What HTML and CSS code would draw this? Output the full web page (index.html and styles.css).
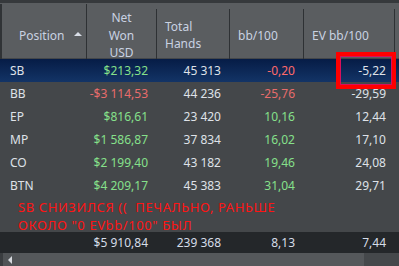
FILE: index.html
```html
<!DOCTYPE html>
<html>
<head>
<meta charset="utf-8">
<link rel="stylesheet" href="styles.css">
</head>
<body>
<div class="app">
  <div class="topstrip"></div>
  <div class="grid head">
    <div class="hc hc-pos"><span>Position</span><span class="sort"></span></div>
    <div class="hc hc-center">Net<br>Won<br>USD</div>
    <div class="hc hc-left">Total<br>Hands</div>
    <div class="hc hc-left">bb/100</div>
    <div class="hc hc-left">EV bb/100</div>
    <div class="hc hc-end"></div>
  </div>
  <div class="rows">
    <div class="grid row sel"><div class="c name">SB</div><div class="c num g">$213,32</div><div class="c num">45 313</div><div class="c num r">-0,20</div><div class="c num ev">-5,22</div><div></div></div>
    <div class="grid row"><div class="c name">BB</div><div class="c num r2">-$3 114,53</div><div class="c num">44 236</div><div class="c num r2">-25,76</div><div class="c num ev">-29,59</div><div></div></div>
    <div class="grid row"><div class="c name">EP</div><div class="c num g">$816,61</div><div class="c num">23 420</div><div class="c num g">10,16</div><div class="c num ev">12,44</div><div></div></div>
    <div class="grid row"><div class="c name">MP</div><div class="c num g">$1 586,87</div><div class="c num">37 834</div><div class="c num g">16,02</div><div class="c num ev">17,10</div><div></div></div>
    <div class="grid row"><div class="c name">CO</div><div class="c num g">$2 199,40</div><div class="c num">43 182</div><div class="c num g">19,46</div><div class="c num ev">24,08</div><div></div></div>
    <div class="grid row"><div class="c name">BTN</div><div class="c num g">$4 209,17</div><div class="c num">45 383</div><div class="c num g">31,04</div><div class="c num ev">29,71</div><div></div></div>
    <div class="note">SB СНИЗИЛСЯ ((&nbsp; ПЕЧАЛЬНО, РАНЬШЕ<br>ОКОЛО "0 EVbb/100" БЫЛ</div>
    <div class="grid row total"><div class="c name"></div><div class="c num">$5 910,84</div><div class="c num">239 368</div><div class="c num">8,13</div><div class="c num ev">7,44</div><div></div></div>
  </div>
  <div class="scroll">
    <div class="sbtn"><span class="arrow"></span></div>
    <div class="thumb"></div>
    <div class="track"></div>
  </div>
  <div class="mark"></div>
</div>
</body>
</html>
```
FILE: styles.css
```css
html, body {
  margin: 0;
  padding: 0;
  background: #44474a;
}
.app {
  position: relative;
  width: 399px;
  height: 266px;
  overflow: hidden;
  font-family: "Noto Sans", "DejaVu Sans", sans-serif;
  font-size: 12px;
}
.topstrip {
  height: 3px;
  background: #36393c;
}
.grid {
  display: grid;
  grid-template-columns: 87px 70px 73px 74px 91px 4px;
}
.head {
  height: 55px;
  background: #5a5d60;
  color: #c9d2e2;
}
.hc {
  display: flex;
  align-items: center;
  line-height: 17.5px;
  margin-top: 6px;
  border-right: 1px solid #2e3134;
}
.hc-pos {
  padding-left: 17px;
  gap: 10px;
  border-left: 2px solid #303336;
  margin-top: 1px;
  padding-top: 5px;
}
.sort {
  width: 0;
  height: 0;
  border-left: 4px solid transparent;
  border-right: 4px solid transparent;
  border-bottom: 4px solid #d8dde6;
  margin-top: -2px;
}
.hc-center {
  justify-content: center;
  text-align: center;
}
.hc-left {
  padding-left: 8px;
}
.hc-end {
  border-right: none;
}
.rows {
  display: flex;
  flex-direction: column;
}
.row {
  height: 23px;
  align-items: center;
  color: #dfe2e8;
}
.row.sel {
  background: linear-gradient(#061c46, #133466);
  margin-top: 1px;
}
.c {
  white-space: nowrap;
}
.name {
  padding-left: 10px;
}
.num {
  text-align: right;
  padding-right: 9px;
}
.ev {
  padding-right: 9px;
}
.g { color: #86e08a; }
.r { color: #ff6a6a; }
.r2 { color: #e86c6c; }
.note {
  height: 35px;
  padding-left: 18px;
  padding-top: 1px;
  box-sizing: border-box;
  color: #ff1414;
  font-size: 13px;
  line-height: 18px;
  letter-spacing: 0.6px;
}
.total {
  height: 21px;
  background: #24272a;
  color: #d5dde8;
}
.scroll {
  display: flex;
  height: 13px;
}
.sbtn {
  width: 20px;
  background: #505356;
  border-left: 3px solid #3a3d40;
  box-sizing: border-box;
  display: flex;
  align-items: center;
  padding-left: 5px;
}
.arrow {
  width: 0;
  height: 0;
  border-top: 4px solid transparent;
  border-bottom: 4px solid transparent;
  border-right: 4px solid #d6d9de;
}
.thumb {
  width: 344px;
  background: #55585b;
}
.track {
  flex: 1;
  background: #45484b;
}
.mark {
  position: absolute;
  left: 336px;
  top: 52px;
  width: 60px;
  height: 37px;
  box-sizing: border-box;
  border: 4px solid #ff0000;
  box-shadow: inset 0 0 0 1px #d8105c;
}
```
